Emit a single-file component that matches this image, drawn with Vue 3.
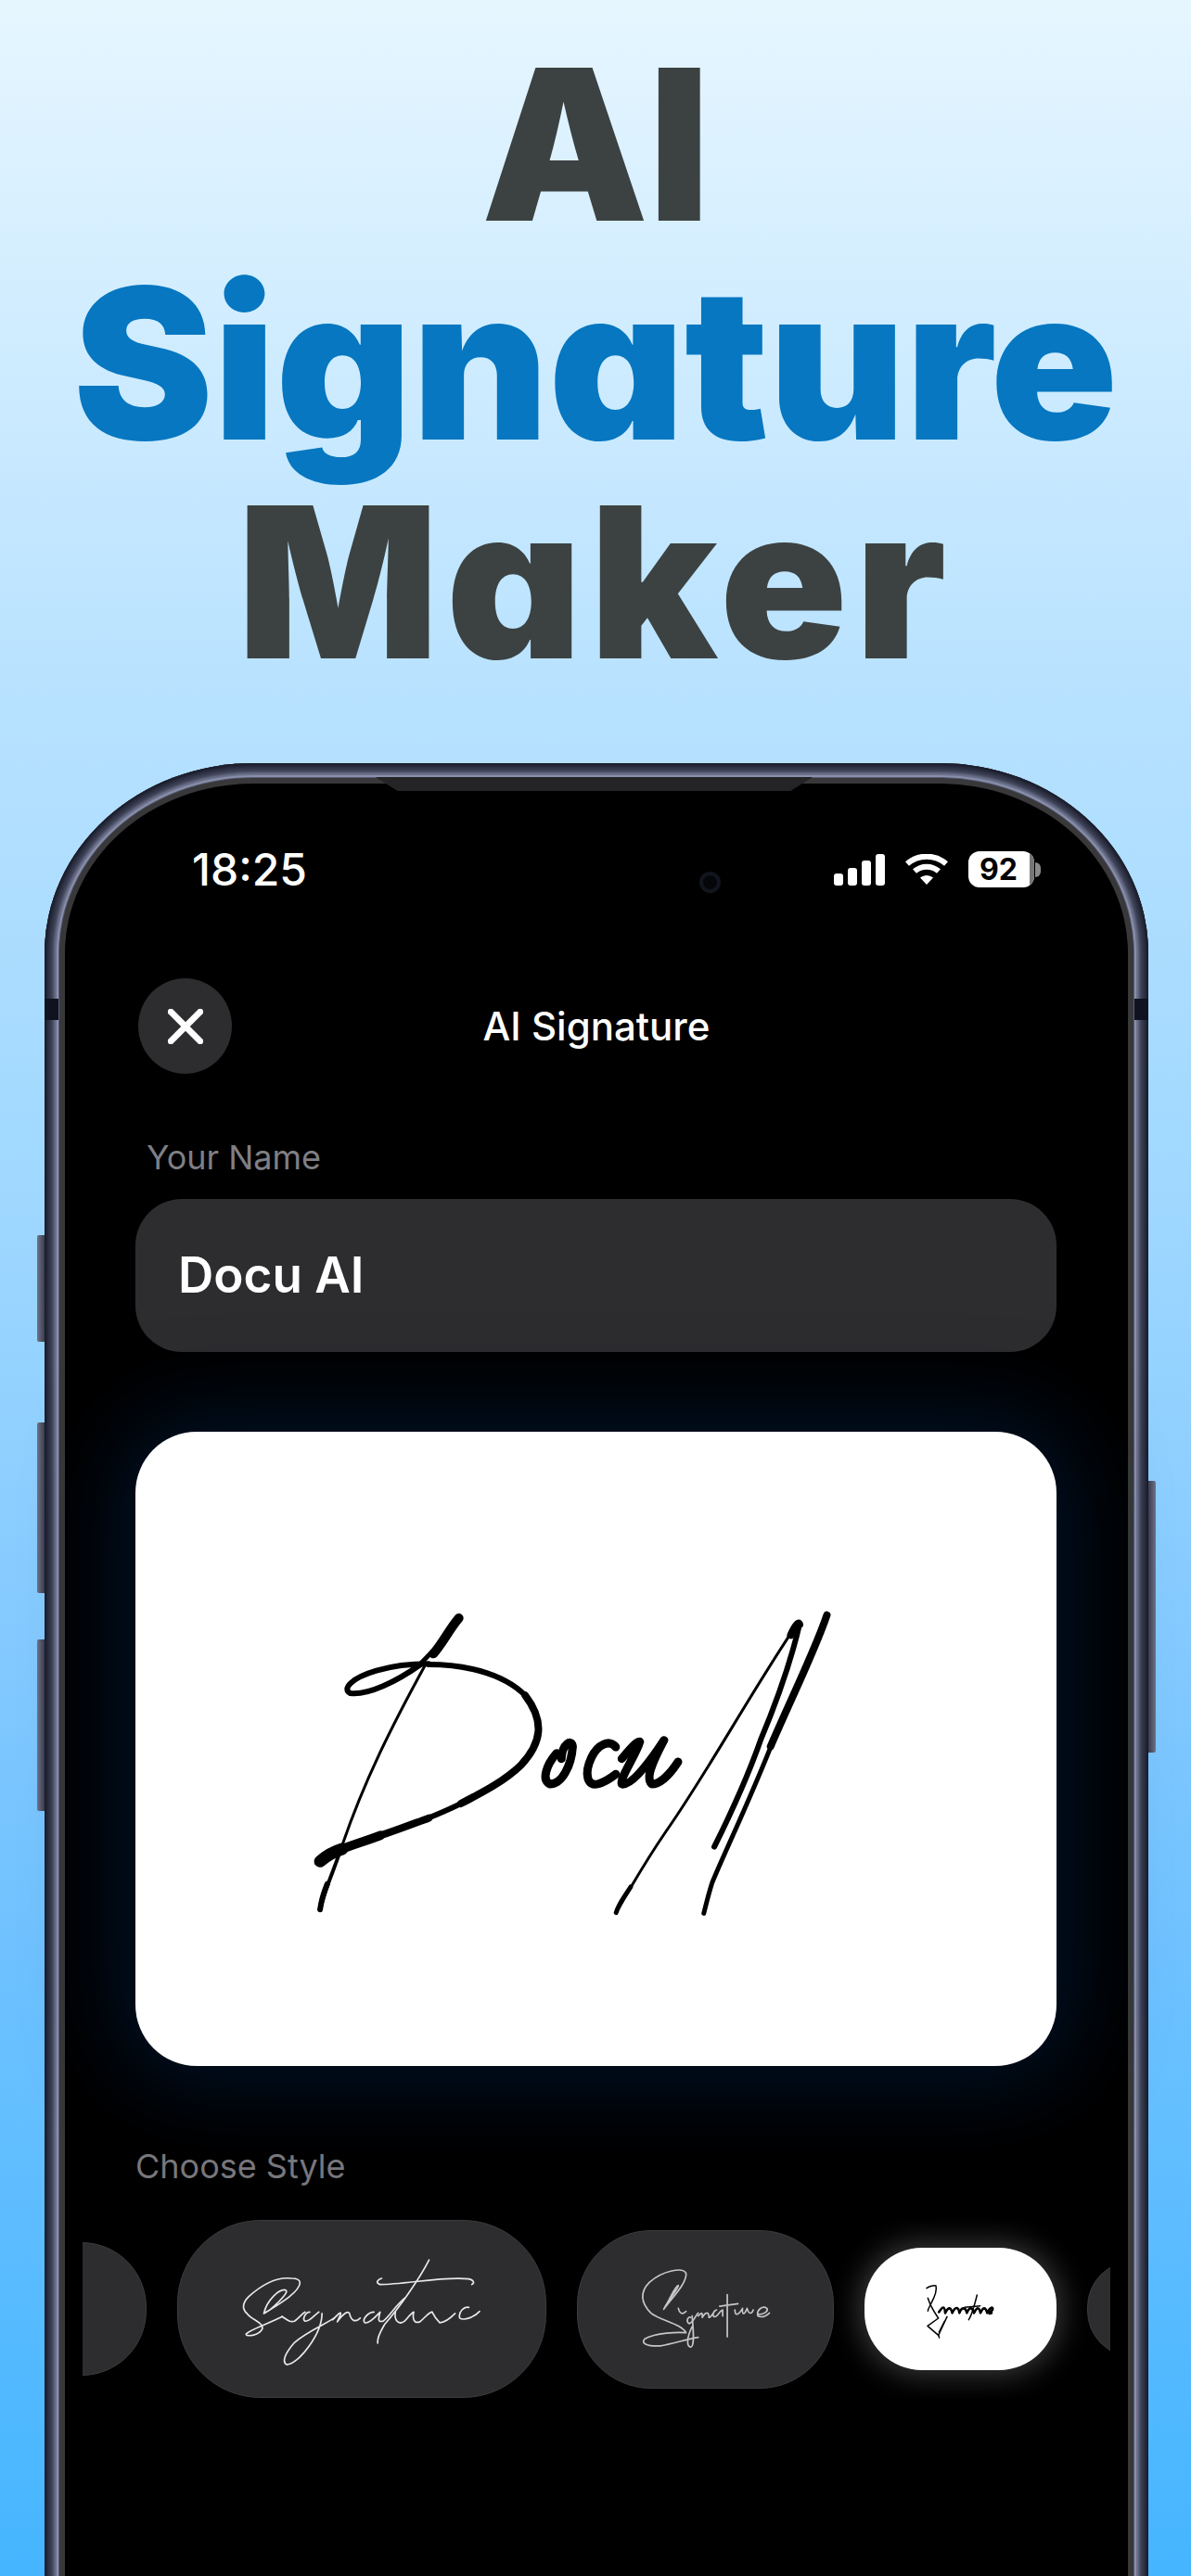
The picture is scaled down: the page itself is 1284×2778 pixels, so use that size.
<script setup>
const bars = [13, 19, 27, 34]
</script>

<template>
  <main class="page">
    <h1 class="headline">
      <span class="ink">AI</span>
      <span class="blue">Signature</span>
      <span class="ink maker">Maker</span>
    </h1>

    <section class="phone">
      <i class="btn b1"></i><i class="btn b2"></i><i class="btn b3"></i><i class="btn b4"></i>
      <i class="band left"></i><i class="band right"></i>
      <div class="screen">
        <i class="notch"></i>
        <i class="camera"></i>
        <div class="status">
          <span class="time">18:25</span>
          <div class="status-icons">
            <div class="signal">
              <i v-for="b in bars" :key="b" :class="'bar h' + b"></i>
            </div>
            <svg class="wifi" viewBox="0 0 48 33" aria-hidden="true">
              <path d="M3 10.5C15 0 33 0 45 10.5" />
              <path d="M11 18.5C18.5 12 29.5 12 37 18.5" />
              <path class="tip" d="M17 25.5C21.5 22 26.5 22 31 25.5L24 33Z" />
            </svg>
            <div class="battery"><span>92</span><i></i></div>
            <i class="battery-tip"></i>
          </div>
        </div>

        <header class="bar-top">
          <button class="close" aria-label="Close">
            <svg viewBox="0 0 36 36" aria-hidden="true"><path d="M3 3L33 33M33 3L3 33" /></svg>
          </button>
          <h2>AI Signature</h2>
          <span></span>
        </header>

        <div class="body">
          <p class="label name-label">Your Name</p>
          <div class="field">Docu AI</div>

          <div class="card">
            <svg class="sig" viewBox="0 0 1568 1200" preserveAspectRatio="none" role="img" aria-label="Docu AI signature">
              <g fill="none" stroke="#000" stroke-linecap="round" stroke-linejoin="round">
                <path class="w3" d="M205 870C260 660 330 480 410 290" />
                <path class="w4" d="M150 1080C162 1010 185 950 205 870" />
                <path class="w6" d="M150 1078C153 1050 160 1020 168 995" />
                <path class="w10" d="M495 135C472 170 455 215 432 250" />
                <path class="w5" d="M450 215L398 285" />
                <path class="w6" d="M400 285C340 340 270 385 225 378C205 365 225 330 290 305C330 290 380 283 420 283" />
                <path class="w6" d="M420 285C520 285 620 320 670 400" />
                <path class="w8" d="M660 385C710 470 700 540 650 610C610 660 560 695 500 735" />
                <path class="w6" d="M520 722C450 770 390 798 330 825" />
                <path class="w8" d="M420 782C370 806 320 832 260 855" />
                <path class="w10" d="M300 838C260 858 220 872 190 890" />
                <path class="w12" d="M205 882C185 890 165 905 150 922" />
                <path class="w9" d="M738 572C712 610 700 660 722 672C752 672 775 610 778 550C776 525 752 540 750 590" />
                <path class="w9" d="M885 552C870 525 840 545 825 585C805 640 815 680 840 672C860 665 875 650 885 640" />
                <path class="w9" d="M900 590C920 560 935 535 945 535C935 580 895 650 900 672C925 680 975 590 1005 530C985 580 955 650 975 672C995 672 1020 640 1040 600" />
                <path class="w3" d="M886 1088C920 1010 960 920 1010 825C1110 640 1210 400 1325 175" />
                <path class="w5" d="M886 1088C892 1060 905 1040 922 1005" />
                <path class="w8" d="M1320 190C1330 160 1340 145 1342 155" />
                <path class="w6" d="M1342 155C1325 250 1290 390 1245 530C1210 660 1170 770 1130 875" />
                <path class="w8" d="M1410 125C1380 240 1330 370 1270 550" />
                <path class="w5" d="M1280 520C1220 720 1160 880 1125 990C1115 1030 1110 1060 1104 1090" />
              </g>
            </svg>
          </div>

          <p class="label style-label">Choose Style</p>

          <div class="strip">
            <div class="thumb t-a"></div>
            <div class="thumb t-b">
              <svg viewBox="-177 -108 1194 576" aria-hidden="true">
                <g fill="none" stroke="#e8e8e8" stroke-linecap="round" stroke-linejoin="round">
                  <path d="M100 195C110 150 150 115 170 118C180 120 170 135 150 155C130 175 115 190 100 195C130 175 215 130 218 95C218 85 210 80 190 80C150 75 100 95 50 140C30 160 28 180 45 195C60 215 100 225 95 245C85 268 40 272 42 262C50 250 110 230 160 205" />
                  <path d="M160 205C175 215 185 225 200 220C215 210 225 195 235 190" />
                  <path d="M250 190C235 190 225 215 235 220C250 222 265 200 280 190" />
                  <path d="M290 195C290 260 215 360 175 362C160 355 165 330 200 290C240 255 300 230 330 210" />
                  <path d="M325 215C345 195 355 185 350 200L340 222C360 195 375 185 380 195C385 220 400 225 415 210" />
                  <path d="M460 190C440 190 420 215 430 225C445 230 470 200 480 190C475 210 470 225 490 220C510 205 530 170 560 145" />
                  <path d="M640 20C610 80 540 180 495 230C480 255 470 280 472 292" />
                  <path d="M485 80C470 85 465 95 480 100C560 100 690 72 770 82C785 85 790 95 780 100" />
                  <path d="M530 190C525 215 540 235 560 220C570 210 580 195 590 190C585 210 590 230 610 222C630 205 640 190 650 190" />
                  <path d="M650 190C655 200 665 215 675 225C690 225 710 210 725 195" />
                  <path d="M770 175C755 170 735 190 740 210C755 220 790 205 805 188" />
                </g>
              </svg>
            </div>
            <div class="thumb t-c">
              <svg viewBox="-177 -108 831 513" aria-hidden="true">
                <g fill="none" stroke="#c6c6c6" stroke-linecap="round" stroke-linejoin="round">
                  <path d="M102 148C120 110 155 75 150 70C140 70 125 110 102 148C130 110 180 60 175 30C165 10 100 20 55 60C25 90 25 125 60 160C90 185 160 195 175 225C150 222 75 225 40 245C25 260 50 270 90 268C130 262 180 245 215 240" />
                  <path d="M195 170C198 210 205 270 190 272C178 270 175 245 195 205" />
                  <path d="M190 175C180 170 175 190 185 195C200 190 205 170 215 160" />
                  <path d="M150 145C155 165 165 165 175 155" />
                  <path d="M215 170C225 160 230 155 228 175C240 155 250 155 250 175C258 175 268 150 275 150C260 155 260 180 275 170C285 160 290 150 295 150L295 170" />
                  <path d="M310 100L310 238M285 138L345 130" />
                  <path d="M335 150C335 170 345 170 360 145C358 165 365 170 375 145C380 165 390 165 395 150" />
                  <path d="M410 165C430 165 445 155 440 145C425 135 405 150 410 170C420 175 435 172 448 160" />
                </g>
              </svg>
            </div>
            <div class="thumb t-d">
              <svg viewBox="-159 -93 621 396" aria-hidden="true">
                <g fill="none" stroke="#000" stroke-linecap="round" stroke-linejoin="round">
                  <path d="M42 38C50 32 65 28 72 30C78 50 60 80 55 90C50 100 46 105 46 112" />
                  <path d="M46 70C55 100 70 120 80 135L45 160L80 190L108 130" />
                  <path d="M80 190L83 198M100 145L82 180" />
                  <path class="w2" d="M82 115C95 95 100 95 102 118C112 98 120 98 125 118C135 95 145 98 148 118C155 98 168 98 172 118C180 98 190 98 195 118C205 98 212 98 216 118C225 98 232 98 238 118C245 100 258 95 255 108C245 118 240 122 252 118" />
                  <path d="M205 60C195 100 188 125 178 140M165 100L215 95" />
                </g>
              </svg>
            </div>
            <div class="thumb t-e"></div>
          </div>
        </div>
      </div>
    </section>
  </main>
</template>

<style>
html, body { margin: 0; background: #8fd0ff; }
</style>

<style scoped>
.page {
  height: 2778px;
  width: 1284px;
  overflow: hidden;
  background: linear-gradient(180deg, #e6f6ff 0%, #b6e1ff 28%, #a0d8ff 46%, #7cc6ff 68%, #45b5ff 100%);
  font-family: Inter, "Liberation Sans", sans-serif;
}
.headline {
  margin: 0;
  padding-top: 38px;
  height: 823px;
  box-sizing: border-box;
  display: flex;
  flex-direction: column;
  align-items: center;
  font-size: 227px;
  font-weight: 900;
  line-height: 236px;
  letter-spacing: 0;
  font-feature-settings: "cv11" 1;
}
.ink { color: #3c4242; }
.blue { color: #0677c0; }
.maker { letter-spacing: 8px; }

.phone {
  position: relative;
  width: 1190px;
  height: 2200px;
  margin-left: 48px;
  box-sizing: border-box;
  padding: 16px 16px 0;
  border-radius: 225px 225px 0 0 / 205px 205px 0 0;
  background: #565b72;
  box-shadow:
    inset 0 0 2px 2px #1b1e2c,
    inset 0 0 4px 6px #262a3b,
    inset 0 0 3px 10px #43475c,
    inset 0 0 1px 13px #6e748e,
    inset 0 0 0 15px #8b91ac;
}
.btn {
  position: absolute;
  width: 8px;
  background: linear-gradient(90deg, #70748a, #3a3d4d);
  border-radius: 2px 0 0 2px;
}
.b1 { left: -8px; top: 509px; height: 115px; }
.b2 { left: -8px; top: 711px; height: 184px; }
.b3 { left: -8px; top: 945px; height: 185px; }
.b4 { right: -8px; top: 774px; height: 293px; border-radius: 0 2px 2px 0; background: linear-gradient(270deg, #70748a, #3a3d4d); }
.band {
  position: absolute;
  top: 254px;
  width: 15px;
  height: 23px;
  background: #10131f;
}
.band.left { left: 0; }
.band.right { right: 0; }

.screen {
  position: relative;
  height: 2184px;
  box-sizing: border-box;
  border: 6px solid #38383a;
  border-bottom: 0;
  border-radius: 209px 209px 0 0 / 189px 189px 0 0;
  background: #000;
  color: #fff;
}
.notch {
  position: absolute;
  left: 335px;
  top: -7px;
  width: 471px;
  height: 15px;
  background: #242426;
  clip-path: polygon(0 0, 100% 0, 95% 100%, 5% 100%);
}
.camera {
  position: absolute;
  left: 684px;
  top: 95px;
  width: 23px;
  height: 23px;
  box-sizing: border-box;
  border-radius: 50%;
  border: 4px solid #12151d;
  background: #05060a;
}
.status {
  display: flex;
  align-items: center;
  justify-content: space-between;
  height: 39px;
  padding: 73px 94px 0 137px;
}
.time {
  font-size: 48px;
  font-weight: 500;
}
.status-icons {
  display: flex;
  align-items: center;
}
.signal {
  display: flex;
  align-items: flex-end;
  gap: 5px;
  margin-right: 21px;
  height: 34px;
}
.bar { width: 10px; background: #fff; border-radius: 3px; }
.h13 { height: 13px; }
.h19 { height: 19px; }
.h27 { height: 27px; }
.h34 { height: 34px; }
.wifi {
  width: 48px;
  height: 33px;
  margin-right: 21px;
  fill: none;
  stroke: #fff;
  stroke-width: 6;
}
.wifi .tip { fill: #fff; stroke: none; }
.battery {
  position: relative;
  width: 71px;
  height: 39px;
  border-radius: 12px;
  overflow: hidden;
  background: #fff;
  color: #000;
  font-size: 32px;
  font-weight: 700;
  line-height: 39px;
  text-align: center;
}
.battery span { padding-right: 6px; }
.battery i {
  position: absolute;
  top: 0;
  right: 0;
  bottom: 0;
  width: 5px;
  background: #777;
}
.battery-tip {
  width: 6px;
  height: 16px;
  margin-left: 1px;
  border-radius: 0 8px 8px 0;
  background: #8a8a8a;
}

.bar-top {
  display: grid;
  grid-template-columns: 1fr auto 1fr;
  align-items: center;
  margin-top: 98px;
}
.bar-top h2 {
  margin: 0;
  font-size: 42px;
  font-weight: 500;
}
.close {
  width: 101px;
  height: 103px;
  margin-left: 79px;
  padding: 0;
  border: 0;
  border-radius: 50%;
  background: #2d2d2f;
  display: flex;
  align-items: center;
  justify-content: center;
}
.close svg {
  width: 38px;
  height: 38px;
  fill: none;
  stroke: #fff;
  stroke-width: 6.5;
  stroke-linecap: round;
}

.body { padding: 0 77px 0 76px; }
.label {
  margin: 0;
  font-size: 36px;
  line-height: 44px;
  font-weight: 400;
  color: #7f7f84;
}
.name-label { margin: 68px 0 0 12px; }
.field {
  height: 165px;
  margin-top: 23px;
  padding-left: 46px;
  border-radius: 50px;
  background: #2d2d2f;
  font-size: 53px;
  font-weight: 600;
  line-height: 165px;
  color: #fff;
}
.card {
  display: flex;
  align-items: center;
  justify-content: center;
  height: 684px;
  margin-top: 86px;
  border-radius: 66px;
  background: #fff;
  box-shadow: 0 0 90px 20px rgba(0, 36, 78, 0.5);
}
.sig {
  width: 680px;
  height: 400px;
  margin: 28px 45px 0 0;
}
.sig path, .thumb path { vector-effect: non-scaling-stroke; }
.w2 { stroke-width: 3; }
.w3 { stroke-width: 3; }
.w4 { stroke-width: 4; }
.w5 { stroke-width: 5; }
.w6 { stroke-width: 6; }
.w8 { stroke-width: 8; }
.w9 { stroke-width: 9; }
.w10 { stroke-width: 10; }
.w12 { stroke-width: 13; }
.style-label { margin-top: 86px; color: #77777c; }
.strip {
  display: flex;
  align-items: center;
  gap: 33px;
  height: 192px;
  margin: 36px -58px 0 -57px;
  overflow: hidden;
}
.thumb {
  flex: none;
  box-sizing: border-box;
  background: #2d2d2f;
  border: 1.5px solid #3b3b3d;
}
.thumb svg {
  display: block;
  width: 100%;
  height: 100%;
}
.thumb svg g { stroke-width: 1.7; }
.t-d svg g { stroke-width: 1.5; }
.t-d svg .w2 { stroke-width: 2.6; }
.t-a { width: 240px; height: 144px; margin-left: -171px; border-radius: 70px; }
.t-b { width: 398px; height: 192px; border-radius: 90px; }
.t-c { width: 277px; height: 171px; border-radius: 80px; }
.t-d {
  width: 207px;
  height: 132px;
  border-radius: 62px;
  border: 0;
  background: #fff;
  box-shadow: 0 0 30px 6px rgba(255, 255, 255, 0.22);
}
.t-e { width: 120px; height: 104px; border-radius: 50px; }
</style>
